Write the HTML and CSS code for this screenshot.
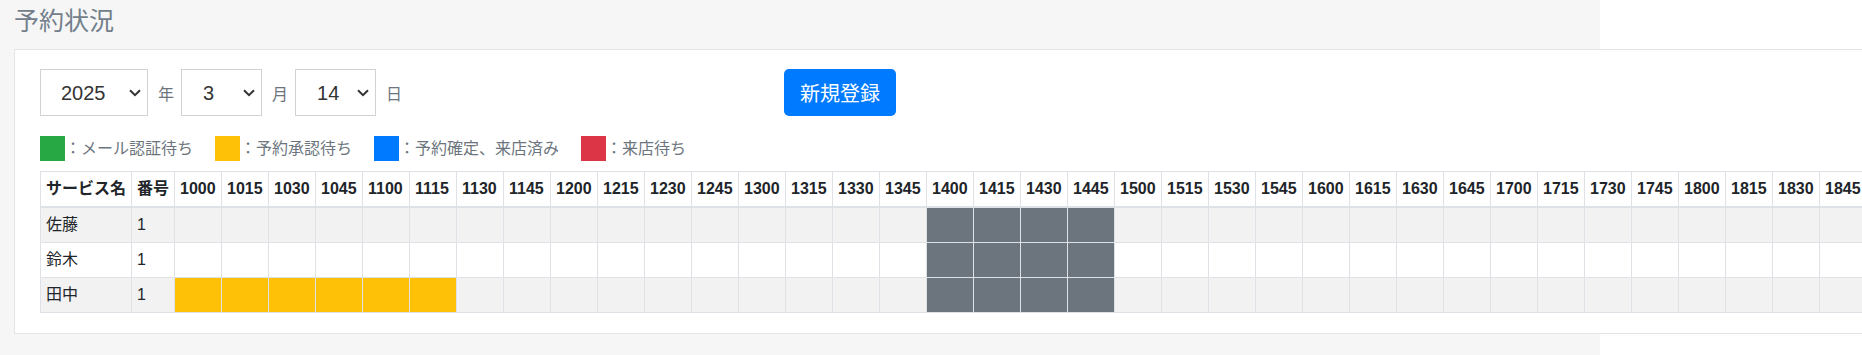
FILE: index.html
```html
<!DOCTYPE html>
<html lang="ja">
<head>
  <meta charset="UTF-8">
  <meta name="viewport" content="width=device-width, initial-scale=1.0">
  <title>予約状況</title>
  <link rel="stylesheet" href="styles.css">
</head>
<body>
  <div class="page">
    <h1 class="page-title">予約状況</h1>

    <div class="card">
      <div class="toolbar">
        <div class="date-select">
          <select class="select select-year">
            <option>2024</option>
            <option selected>2025</option>
            <option>2026</option>
          </select>
          <span class="date-label">年</span>
          <select class="select">
            <option>1</option>
            <option>2</option>
            <option selected>3</option>
            <option>4</option>
          </select>
          <span class="date-label">月</span>
          <select class="select">
            <option>13</option>
            <option selected>14</option>
            <option>15</option>
          </select>
          <span class="date-label">日</span>
        </div>
        <button class="button">新規登録</button>
      </div>

      <div class="legend">
        <div class="legend-item"><span class="legend-box box-mail"></span>：メール認証待ち</div>
        <div class="legend-item"><span class="legend-box box-pending"></span>：予約承認待ち</div>
        <div class="legend-item"><span class="legend-box box-confirmed"></span>：予約確定、来店済み</div>
        <div class="legend-item"><span class="legend-box box-waiting"></span>：来店待ち</div>
      </div>

      <table class="schedule">
        <thead>
          <tr>
            <th>サービス名</th>
            <th>番号</th>
            <th class="slot">1000</th><th class="slot">1015</th><th class="slot">1030</th><th class="slot">1045</th>
            <th class="slot">1100</th><th class="slot">1115</th><th class="slot">1130</th><th class="slot">1145</th>
            <th class="slot">1200</th><th class="slot">1215</th><th class="slot">1230</th><th class="slot">1245</th>
            <th class="slot">1300</th><th class="slot">1315</th><th class="slot">1330</th><th class="slot">1345</th>
            <th class="slot">1400</th><th class="slot">1415</th><th class="slot">1430</th><th class="slot">1445</th>
            <th class="slot">1500</th><th class="slot">1515</th><th class="slot">1530</th><th class="slot">1545</th>
            <th class="slot">1600</th><th class="slot">1615</th><th class="slot">1630</th><th class="slot">1645</th>
            <th class="slot">1700</th><th class="slot">1715</th><th class="slot">1730</th><th class="slot">1745</th>
            <th class="slot">1800</th><th class="slot">1815</th><th class="slot">1830</th><th class="slot">1845</th>
            <th class="slot">1900</th><th class="slot">1915</th><th class="slot">1930</th><th class="slot">1945</th>
          </tr>
        </thead>
        <tbody>
          <tr>
            <td>佐藤</td>
            <td>1</td>
            <td></td><td></td><td></td><td></td><td></td><td></td><td></td><td></td>
            <td></td><td></td><td></td><td></td><td></td><td></td><td></td><td></td>
            <td class="busy"></td><td class="busy"></td><td class="busy"></td><td class="busy"></td>
            <td></td><td></td><td></td><td></td><td></td><td></td><td></td><td></td><td></td><td></td>
            <td></td><td></td><td></td><td></td><td></td><td></td><td></td><td></td><td></td><td></td>
          </tr>
          <tr>
            <td>鈴木</td>
            <td>1</td>
            <td></td><td></td><td></td><td></td><td></td><td></td><td></td><td></td>
            <td></td><td></td><td></td><td></td><td></td><td></td><td></td><td></td>
            <td class="busy"></td><td class="busy"></td><td class="busy"></td><td class="busy"></td>
            <td></td><td></td><td></td><td></td><td></td><td></td><td></td><td></td><td></td><td></td>
            <td></td><td></td><td></td><td></td><td></td><td></td><td></td><td></td><td></td><td></td>
          </tr>
          <tr>
            <td>田中</td>
            <td>1</td>
            <td class="pending"></td><td class="pending"></td><td class="pending"></td>
            <td class="pending"></td><td class="pending"></td><td class="pending"></td>
            <td></td><td></td><td></td><td></td><td></td><td></td><td></td><td></td><td></td><td></td>
            <td class="busy"></td><td class="busy"></td><td class="busy"></td><td class="busy"></td>
            <td></td><td></td><td></td><td></td><td></td><td></td><td></td><td></td><td></td><td></td>
            <td></td><td></td><td></td><td></td><td></td><td></td><td></td><td></td><td></td><td></td>
          </tr>
        </tbody>
      </table>
    </div>
  </div>
</body>
</html>
```

FILE: styles.css
```css
:root {
  --page-bg: #f6f6f6;
  --text: #212529;
  --muted: #6c757d;
  --line: #dee2e6;
  --blue: #007bff;
  --green: #28a745;
  --yellow: #ffc107;
  --red: #dc3545;
  --gray: #6c757d;
}

* {
  box-sizing: border-box;
}

body {
  margin: 0;
  font-family: "Liberation Sans", "Noto Sans CJK JP", sans-serif;
  font-size: 16px;
  color: var(--text);
  background-color: #fff;
}

.page {
  width: 1600px;
  padding: 0 14px 40px;
  background-color: var(--page-bg);
}

.page-title {
  margin: 0;
  height: 49px;
  padding-bottom: 6px;
  font-size: 25px;
  line-height: 43px;
  font-weight: normal;
  color: #737e8b;
}

.card {
  width: max-content;
  padding: 19px 25px 20px;
  background-color: #fff;
  border: 1px solid #e4e4e4;
}

/* date selects + register button */
.toolbar {
  display: flex;
  align-items: center;
  height: 47px;
}

.date-select {
  display: flex;
  align-items: center;
  width: 744px;
}

.select {
  appearance: none;
  -webkit-appearance: none;
  width: 81px;
  height: 47px;
  padding: 0 0 0 21px;
  border: 1px solid #d2d2d2;
  border-radius: 0;
  background-color: #fff;
  background-image: url("data:image/svg+xml,%3Csvg xmlns='http://www.w3.org/2000/svg' width='12' height='8' viewBox='0 0 12 8'%3E%3Cpath d='M1 1.2l5 5 5-5' fill='none' stroke='%23333' stroke-width='2'/%3E%3C/svg%3E");
  background-repeat: no-repeat;
  background-position: right 6px center;
  font-family: inherit;
  font-size: 20px;
  color: #333;
}

.select-year {
  width: 108px;
  padding-left: 20px;
}

.date-label {
  margin: 0 7px 0 10px;
  color: var(--muted);
  font-size: 16px;
}

.button {
  width: 112px;
  height: 47px;
  padding: 0;
  border: none;
  border-radius: 5px;
  background-color: var(--blue);
  color: #fff;
  font-family: inherit;
  font-size: 20px;
  cursor: pointer;
}

/* status legend */
.legend {
  display: flex;
  gap: 22px;
  margin-top: 20px;
  color: var(--muted);
  font-size: 16px;
  line-height: 25px;
}

.legend-item {
  display: flex;
  align-items: center;
}

.legend-box {
  display: inline-block;
  width: 25px;
  height: 25px;
}

.box-mail { background-color: var(--green); }
.box-pending { background-color: var(--yellow); }
.box-confirmed { background-color: var(--blue); }
.box-waiting { background-color: var(--red); }

/* schedule table */
.schedule {
  margin-top: 10px;
  border-collapse: collapse;
  white-space: nowrap;
}

.schedule th,
.schedule td {
  padding: 5px;
  line-height: 24px;
  border: 1px solid var(--line);
  text-align: left;
}

.schedule thead th {
  border-bottom-width: 2px;
  font-weight: bold;
}

.schedule .slot {
  width: 47px;
  min-width: 47px;
}

.schedule tbody tr:nth-child(odd) {
  background-color: #f2f2f2;
}

.schedule td.busy {
  background-color: var(--gray);
}

.schedule td.pending {
  background-color: var(--yellow);
}
```
